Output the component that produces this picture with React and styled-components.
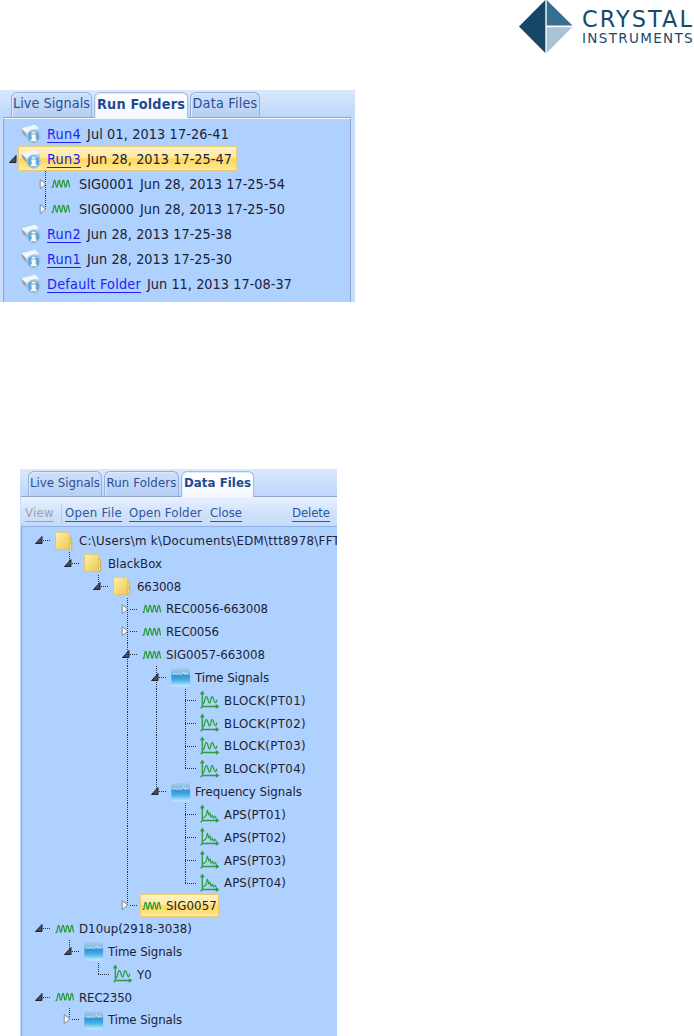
import React, { useLayoutEffect, useRef, useState } from "react";
import styled, { createGlobalStyle, css } from "styled-components";

const GlobalStyle = createGlobalStyle`
  body {
    margin: 0;
    background: #fff;
    overflow: hidden;
  }
`;

const FONT = `"DejaVu Sans Condensed", "DejaVu Sans", "Noto Sans", sans-serif`;

const Page = styled.div`
  width: 694px;
  height: 1036px;
  overflow: hidden;
  background: #fff;
  font-family: ${FONT};
  font-stretch: condensed;
`;

const Header = styled.header`
  height: 90px;
  display: flex;
  justify-content: flex-end;
`;

const Logo = styled.div`
  display: flex;
  gap: 9px;
  height: 54px;
  color: #174a6d;
`;

const LogoText = styled.div`
  display: flex;
  flex-direction: column;
  width: 112px;
  padding-top: 8px;
  box-sizing: border-box;
  font-family: "DejaVu Sans", sans-serif;
  font-stretch: normal;
`;

const LogoTop = styled.div`
  font-size: 22.4px;
  line-height: 22px;
`;

const LogoBottom = styled.div`
  font-size: 13.5px;
  line-height: 17px;
`;

const FitBox = styled.span`
  display: inline-block;
  flex: none;
  white-space: pre;
`;

const RunPanel = styled.section`
  width: 355px;
  height: 212px;
  box-sizing: border-box;
  padding: 0 4px 0 3px;
  overflow: hidden;
  font-size: 14.3px;
  background: linear-gradient(#d9e8fd 0, #bdd6fb 28px, #c9defc 29px);
`;

const DataPanel = styled.section`
  width: 317px;
  height: 567px;
  box-sizing: border-box;
  margin: 167px 0 0 20px;
  padding-left: 1px;
  overflow: hidden;
  font-size: 13.1px;
  background: linear-gradient(#d9e8fd 0, #bdd6fb 28px, #c9defc 29px);
`;

const Tabs = styled.div`
  display: flex;
  align-items: flex-end;
  gap: 2px;
  height: 27px;
  padding-left: ${(p) => p.$left}px;
  border-bottom: 1px solid #8fa5cc;
`;

const Tab = styled.div`
  display: flex;
  justify-content: center;
  align-items: center;
  box-sizing: border-box;
  width: ${(p) => p.$w}px;
  height: 25px;
  padding-bottom: 4px;
  border: 1px solid #94b0dc;
  border-bottom: 0;
  border-radius: 6px 6px 0 0;
  color: #2a5095;
  background: linear-gradient(#cfe0f9, #b6cff3);
  box-shadow: inset 1px 1px 0 #dceafd;
  ${(p) =>
    p.$active &&
    css`
      height: 26px;
      margin-bottom: -1px;
      color: #1d4a92;
      font-weight: bold;
      background: linear-gradient(#ffffff, #f5f9ff);
      border-color: #a5bde2;
    `}
`;

const Toolbar = styled.div`
  display: flex;
  align-items: center;
  height: 30px;
  box-sizing: border-box;
  padding: 4px 0 0 4px;
  border-bottom: 1px solid #8fb0e3;
  background: linear-gradient(#e9f2ff, #d3e3fb 50%, #c5dafa);
`;

const ToolLink = styled.a`
  display: flex;
  margin-left: ${(p) => p.$gap || 0}px;
  line-height: 16px;
  border-bottom: 1px solid;
  color: ${(p) => (p.$disabled ? "#a0a3a8" : "#2f55a0")};
`;

const Divider = styled.div`
  width: 1px;
  height: 20px;
  margin: 0 3px 0 7px;
  background: #b7cbe9;
`;

const RunTree = styled.div`
  height: 190px;
  padding-top: 2px;
  border: 1px solid #8fa5cc;
  border-top: 1px solid #f3f8ff;
  border-width: 1px 1px 0;
  background: #afd1ff;
`;

const DataTree = styled.div`
  height: 520px;
  padding: 2.1px 0 0 4px;
  border-left: 1px solid #8fa5cc;
  background: #afd1ff;
`;

const RunRow = styled.div`
  display: flex;
  align-items: center;
  height: 25.1px;
  color: #1b2233;
`;

const DataRow = styled.div`
  display: flex;
  height: 22.83px;
  color: #1b2233;
`;

const Slot = styled.div`
  display: flex;
  justify-content: ${(p) => (p.$end ? "flex-end" : "flex-start")};
  align-items: center;
  flex: none;
  width: ${(p) => p.$w}px;
`;

const selected = css`
  background: linear-gradient(#fff3c6 0, #ffe9a0 45%, #ffd65a 52%, #ffe487 85%, #fff0b4);
  box-shadow: inset 0 0 0 1px #ecc873;
  border-radius: 2px;
`;

const Label = styled.div`
  display: flex;
  align-items: center;
  height: 100%;
  box-sizing: border-box;
  padding: ${(p) => p.$pad};
  margin-left: ${(p) => p.$shift || 0}px;
  ${(p) => p.$selected && selected}
`;

const RunLink = styled.a`
  display: flex;
  margin: 2px 6px 0 5px;
  line-height: 15px;
  color: #2222f0;
  border-bottom: 1px solid #2222f0;
`;

const DateText = styled.span`
  display: flex;
  margin-left: ${(p) => p.$left || 0}px;
`;

const dotsDown = `repeating-linear-gradient(#25324a 0 1px, transparent 1px 2px)`;
const dotsAcross = `repeating-linear-gradient(90deg, #25324a 0 1px, transparent 1px 2px)`;

const RunGuide = styled.div`
  position: relative;
  flex: none;
  width: 47px;
  height: 100%;
  &::before {
    content: "";
    position: absolute;
    left: 41px;
    top: 0;
    width: 1px;
    height: ${(p) => (p.$last ? "50%" : "100%")};
    background: ${dotsDown};
  }
  svg {
    position: absolute;
    left: 35px;
    top: 7px;
  }
`;

const Guide = styled.div`
  position: relative;
  flex: none;
  width: 29px;
  height: 100%;
  &::before {
    content: "";
    position: absolute;
    left: 14px;
    top: 0;
    width: 1px;
    height: ${(p) => p.$down};
    background: ${dotsDown};
  }
  &::after {
    content: "";
    position: absolute;
    left: ${(p) => (p.$leaf ? 14 : 17)}px;
    right: 4px;
    top: 11px;
    height: ${(p) => (p.$branch ? 1 : 0)}px;
    background: ${dotsAcross};
  }
  svg {
    position: absolute;
    left: 8px;
    top: 5px;
    z-index: 1;
  }
`;

/* Spreads the letters so that the text fills exactly w pixels. */
const Fit = ({ w, children }) => {
  const ref = useRef(null);
  const [spacing, setSpacing] = useState(0);
  useLayoutEffect(() => {
    const natural = ref.current.getBoundingClientRect().width;
    setSpacing((w - natural) / children.length);
  }, [w, children]);
  return (
    <FitBox ref={ref} style={{ letterSpacing: `${spacing}px` }}>
      {children}
    </FitBox>
  );
};

const Arrow = ({ open }) => (
  <svg width="10" height="12" viewBox="0 0 10 12">
    {open ? (
      <path d="M8 2.5V9.5H1.5Z" fill="#4a4d55" stroke="#20242c" />
    ) : (
      <path d="M1.2 1.5V10.8L6.8 6.1Z" fill="#f4f7fc" stroke="#858b99" />
    )}
  </svg>
);

const WaveIcon = () => (
  <svg width="20" height="12" viewBox="0 0 20 12" fill="none">
    <path
      d="M.5 9.3H1.8L3 3.2Q3.6 1.5 4.2 3.2L5.2 8.2Q5.8 9.8 6.4 8.2L7.4 3.2Q8 1.5 8.6 3.2L9.6 8.2Q10.2 9.8 10.8 8.2L11.8 3.2Q12.4 1.5 13 3.2L14 8.2Q14.6 9.8 15.2 8.2L16.2 3.2Q16.8 1.5 17.4 3.2L18.6 9.3"
      stroke="#2c9c38"
      strokeWidth="1.25"
    />
  </svg>
);

const FolderIcon = () => (
  <svg width="19" height="20" viewBox="0 0 19 20">
    <defs>
      <linearGradient id="folder" x1="0" y1="0" x2="1" y2="1">
        <stop offset="0" stopColor="#fff3a8" />
        <stop offset="1" stopColor="#ecc750" />
      </linearGradient>
    </defs>
    <path d="M13 6.5H16.5L17 18H13Z" fill="#f3d56c" stroke="#d3ae48" strokeWidth=".8" />
    <path
      d="M.5 2.2Q.5 1.3 1.5 1.3H13.5Q14.5 1.3 14.5 2.3V18.5H1.5Q.5 18.5 .5 17.5Z"
      fill="url(#folder)"
      stroke="#e2c05c"
      strokeWidth=".8"
    />
    <path d="M14.5 14L16 11.5V17.5L14.5 18.5Z" fill="#fffbe0" stroke="#c39a3c" strokeWidth=".5" />
  </svg>
);

const SignalsIcon = () => (
  <svg width="20" height="20" viewBox="0 0 20 20">
    <defs>
      <linearGradient id="signals" x1="0" y1="0" x2="0" y2="1">
        <stop offset="0" stopColor="#a9cbea" />
        <stop offset=".3" stopColor="#7fb8e4" />
        <stop offset=".42" stopColor="#2d93d6" />
        <stop offset=".65" stopColor="#48aee8" />
        <stop offset="1" stopColor="#c5eaff" />
      </linearGradient>
    </defs>
    <rect x=".3" y="1" width="18.8" height="18.4" rx="2.5" fill="url(#signals)" />
    <path
      d="M2 7.8L4 6 5.5 7.6 7.5 6.2 9.5 7.8 12.5 4.8 14 7.4 15.8 5.8 17.5 7.6"
      fill="none"
      stroke="#d3eafb"
      strokeWidth=".9"
    />
  </svg>
);

const ChartIcon = ({ aps }) => (
  <svg width="21" height="20" viewBox="0 0 21 20" fill="none" stroke="#2c9c3c">
    <path d="M2.3 2V16.5H17.5M.6 4.4L2.3 1.8 4 4.4M15.8 14.8L18.3 16.5 15.8 18.2M.6 18.2L2.3 16.5" strokeWidth="1.3" />
    {aps ? (
      <path
        d="M3 14L4.8 12.8 6.2 11.5 7.4 5.8 8.8 10.8 10 9.3 11 13 12.5 11.3 13.5 14 15 12.3 16.5 14.5"
        strokeWidth="1.1"
      />
    ) : (
      <path
        d="M3 13.8C5 13.8 4.4 6.6 6.3 6.6S8 13 9.6 13 10.4 6.6 12.2 6.6 13.6 12.6 15.2 12.6 16.3 11 16.8 9.6"
        strokeWidth="1.25"
      />
    )}
  </svg>
);

const RunIcon = () => (
  <svg width="21" height="20" viewBox="0 0 21 20">
    <defs>
      <linearGradient id="disk" x1="0" y1="0" x2="1" y2="1">
        <stop offset="0" stopColor="#fafdff" />
        <stop offset=".5" stopColor="#c3d6e4" />
        <stop offset="1" stopColor="#63879c" />
      </linearGradient>
      <radialGradient id="ball">
        <stop offset="0" stopColor="#8ec7ec" />
        <stop offset=".7" stopColor="#5f9fce" />
        <stop offset="1" stopColor="#b8d7e9" />
      </radialGradient>
    </defs>
    <path d="M.3 4.6L13.8 .8 18 4.2 4.8 9Z" fill="#f2f7fd" />
    <path d="M.3 4.6L4.8 9 7 14.8 1.5 9.5Z" fill="#8fa5b5" />
    <path d="M4.8 9L18 4.2 19 9 7 15Z" fill="url(#disk)" />
    <circle cx="12.6" cy="12.6" r="6.8" fill="url(#ball)" stroke="#a3c4da" strokeWidth=".8" />
    <path d="M10.6 7.8H14.6V9.6H10.6ZM10.6 10.6H14.6V15.2H15.6V17.2H9.8V15.2H10.9V12.4H10.2Z" fill="#f4fbff" />
  </svg>
);

const icons = {
  folder: <FolderIcon />,
  wave: <WaveIcon />,
  signals: <SignalsIcon />,
  chart: <ChartIcon />,
  aps: <ChartIcon aps />,
};

const node = (icon, text, w, children, extra) => ({ icon, text, w, children, ...extra });

const channels = ["PT01", "PT02", "PT03", "PT04"];

const files = [
  node("folder", "C:\\Users\\m k\\Documents\\EDM\\ttt8978\\FFT", 261, [
    node("folder", "BlackBox", 54, [
      node("folder", "663008", 44, [
        node("wave", "REC0056-663008", 102, []),
        node("wave", "REC0056", 53, []),
        node("wave", "SIG0057-663008", 99, [
          node("signals", "Time Signals", 74, channels.map((c) => node("chart", `BLOCK(${c})`, 82))),
          node("signals", "Frequency Signals", 107, channels.map((c) => node("aps", `APS(${c})`, 62))),
        ]),
        node("wave", "SIG0057", 51, [], { selected: true }),
      ]),
    ]),
  ]),
  node("wave", "D10up(2918-3038)", 113, [
    node("signals", "Time Signals", 74, [node("chart", "Y0", 15)]),
  ]),
  node("wave", "REC2350", 53, [node("signals", "Time Signals", 74, [])]),
];

const TreeNode = ({ item, level, last, rails }) => {
  const leaf = !item.children;
  const open = !leaf && item.children.length > 0;
  const down = level === 0 ? "0" : last ? "12px" : "100%";
  return (
    <>
      <DataRow>
        {rails.map((rail, i) => (
          <Guide key={i} $down={rail ? "100%" : "0"} />
        ))}
        <Guide $down={down} $leaf={leaf} $branch>
          {!leaf && <Arrow open={open} />}
        </Guide>
        <Label
          $selected={item.selected}
          $pad={item.selected ? "0 2px" : "0"}
          $shift={item.selected ? -2 : 0}
        >
          <Slot $w={24}>{icons[item.icon]}</Slot>
          <Fit w={item.w}>{item.text}</Fit>
        </Label>
      </DataRow>
      {open &&
        item.children.map((child, i) => (
          <TreeNode
            key={child.text}
            item={child}
            level={level + 1}
            last={i === item.children.length - 1}
            rails={[...rails, level > 0 && !last]}
          />
        ))}
    </>
  );
};

const RunItem = ({ name, w, date, dateW = 145, active }) => (
  <RunRow>
    <Slot $w={14} $end>
      {active && <Arrow open />}
    </Slot>
    <Label $selected={active} $pad="0 5px 0 3px">
      <RunIcon />
      <RunLink>
        <Fit w={w}>{name}</Fit>
      </RunLink>
      <Fit w={dateW}>{date}</Fit>
    </Label>
  </RunRow>
);

const SignalItem = ({ name, date, last }) => (
  <RunRow>
    <RunGuide $last={last}>
      <Arrow />
    </RunGuide>
    <WaveIcon />
    <DateText $left={8}>
      <Fit w={55}>{name}</Fit>
    </DateText>
    <DateText $left={6}>
      <Fit w={145}>{date}</Fit>
    </DateText>
  </RunRow>
);

const App = () => {
  return (
    <Page>
      <GlobalStyle />
      <Header>
        <Logo>
          <svg width="54" height="54" viewBox="0 0 54 54">
            <path d="M26.3 0V53L0 26.5Z" fill="#164766" />
            <path d="M27.7 0L53.5 25.5H27.7Z" fill="#386f91" />
            <path d="M27.7 27.2H53L27.7 53Z" fill="#a9c3d5" />
          </svg>
          <LogoText>
            <LogoTop>
              <Fit w={112}>CRYSTAL</Fit>
            </LogoTop>
            <LogoBottom>
              <Fit w={112}>INSTRUMENTS</Fit>
            </LogoBottom>
          </LogoText>
        </Logo>
      </Header>
      <RunPanel>
        <Tabs $left={8}>
          <Tab $w={81}>
            <Fit w={77}>Live Signals</Fit>
          </Tab>
          <Tab $w={94} $active>
            <Fit w={88}>Run Folders</Fit>
          </Tab>
          <Tab $w={70}>
            <Fit w={65}>Data Files</Fit>
          </Tab>
        </Tabs>
        <RunTree>
          <RunItem name="Run4" w={34} date="Jul 01, 2013 17-26-41" dateW={142} />
          <RunItem name="Run3" w={34} date="Jun 28, 2013 17-25-47" active />
          <SignalItem name="SIG0001" date="Jun 28, 2013 17-25-54" />
          <SignalItem name="SIG0000" date="Jun 28, 2013 17-25-50" last />
          <RunItem name="Run2" w={34} date="Jun 28, 2013 17-25-38" />
          <RunItem name="Run1" w={34} date="Jun 28, 2013 17-25-30" />
          <RunItem name="Default Folder" w={94} date="Jun 11, 2013 17-08-37" />
        </RunTree>
      </RunPanel>
      <DataPanel>
        <Tabs $left={7}>
          <Tab $w={74}>
            <Fit w={70}>Live Signals</Fit>
          </Tab>
          <Tab $w={75}>
            <Fit w={70}>Run Folders</Fit>
          </Tab>
          <Tab $w={73} $active>
            <Fit w={67}>Data Files</Fit>
          </Tab>
        </Tabs>
        <Toolbar>
          <ToolLink $disabled>
            <Fit w={29}>View</Fit>
          </ToolLink>
          <Divider />
          <ToolLink>
            <Fit w={57}>Open File</Fit>
          </ToolLink>
          <ToolLink $gap={7}>
            <Fit w={73}>Open Folder</Fit>
          </ToolLink>
          <ToolLink $gap={8}>
            <Fit w={32}>Close</Fit>
          </ToolLink>
          <ToolLink $gap={50}>
            <Fit w={38}>Delete</Fit>
          </ToolLink>
        </Toolbar>
        <DataTree>
          {files.map((item, i) => (
            <TreeNode key={item.text} item={item} level={0} last={i === files.length - 1} rails={[]} />
          ))}
        </DataTree>
      </DataPanel>
    </Page>
  );
};

export default App;
